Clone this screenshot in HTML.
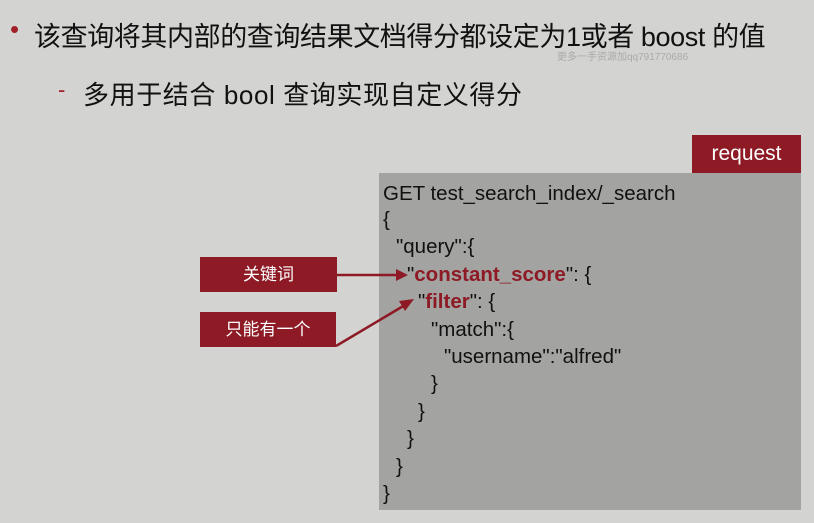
<html><head><style>
body{margin:0;width:814px;height:523px;background:#d3d4d1;position:relative;overflow:hidden;font-family:"Liberation Sans","Noto Sans CJK SC",sans-serif;}
.t{position:absolute;white-space:nowrap;color:#111;}
.box{position:absolute;background:#8d1a24;color:#fff;text-align:center;}
.code{position:absolute;left:379px;top:173px;width:422px;height:337px;background:#a3a3a1;}
.l{position:absolute;font-size:20.5px;color:#111;white-space:nowrap;line-height:20px;}
.r{color:#8d1a24;font-weight:bold;}
</style></head><body>
<div class="t" style="left:10px;top:14px;font-size:26px;color:#a0202a">•</div>
<div class="t" style="left:34px;top:15px;font-size:27px;letter-spacing:-0.4px">该查询将其内部的查询结果文档得分都设定为1或者 boost 的值</div>
<div class="t" style="left:557px;top:48px;font-size:10px;color:#aaa">更多一手资源加qq791770686</div>
<div class="t" style="left:58px;top:77px;font-size:22px;color:#a0202a">-</div>
<div class="t" style="left:83px;top:75px;font-size:26px;letter-spacing:0.6px">多用于结合 bool 查询实现自定义得分</div>
<div class="box" style="left:692px;top:135px;width:109px;height:38px;font-size:21px;line-height:38px">request</div>
<div class="code"></div>
<div class="l" style="left:383px;top:184px">GET test_search_index/_search</div>
<div class="l" style="left:383px;top:210px">{</div>
<div class="l" style="left:396px;top:237px">"query":{</div>
<div class="l" style="left:407px;top:265px">"<span class="r">constant_score</span>": {</div>
<div class="l" style="left:418px;top:292px">"<span class="r">filter</span>": {</div>
<div class="l" style="left:431px;top:320px">"match":{</div>
<div class="l" style="left:444px;top:347px">"username":"alfred"</div>
<div class="l" style="left:431px;top:374px">}</div>
<div class="l" style="left:418px;top:402px">}</div>
<div class="l" style="left:407px;top:429px">}</div>
<div class="l" style="left:396px;top:457px">}</div>
<div class="l" style="left:383px;top:484px">}</div>
<div class="box" style="left:200px;top:257px;width:137px;height:35px;font-size:17px;line-height:35px">关键词</div>
<div class="box" style="left:200px;top:312px;width:136px;height:35px;font-size:17px;line-height:35px">只能有一个</div>
<svg style="position:absolute;left:0;top:0" width="814" height="523">
<line x1="337" y1="275" x2="398" y2="275" stroke="#8d1a24" stroke-width="2.5"/>
<polygon points="408,275 396,269 396,281" fill="#8d1a24"/>
<line x1="336" y1="346" x2="405" y2="305" stroke="#8d1a24" stroke-width="2.5"/>
<polygon points="414,299 399,301 405,311" fill="#8d1a24"/>
</svg>
</body></html>
